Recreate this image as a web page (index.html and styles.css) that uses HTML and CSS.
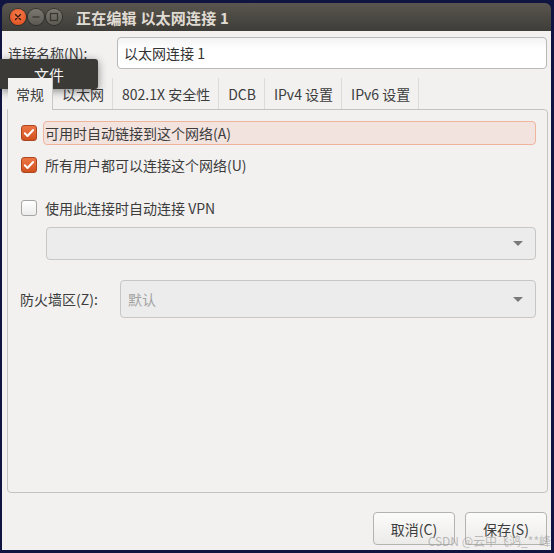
FILE: index.html
```html
<!DOCTYPE html>
<html lang="zh-CN">
<head>
<meta charset="utf-8">
<title>正在编辑 以太网连接 1</title>
<link rel="stylesheet" href="styles.css">
</head>
<body>
<div class="window">
  <div class="titlebar">
    <div class="wbtns">
      <span class="wbtn close"><svg width="16" height="16" viewBox="0 0 16 16"><path d="M5.5 5.5l5 5M10.5 5.5l-5 5" stroke="#3a1a10" stroke-width="1.4" stroke-linecap="round"/></svg></span>
      <span class="wbtn"><svg width="16" height="16" viewBox="0 0 16 16"><path d="M4.5 8h7" stroke="#38372f" stroke-width="1.3"/></svg></span>
      <span class="wbtn"><svg width="16" height="16" viewBox="0 0 16 16"><rect x="4.5" y="4.5" width="7" height="7" fill="none" stroke="#38372f" stroke-width="1.2"/></svg></span>
    </div>
    <div class="title">正在编辑 以太网连接 1</div>
  </div>
  <div class="content">
    <div class="name-row">
      <span class="name-label">连接名称(N):</span>
      <div class="entry">以太网连接 1</div>
    </div>
    <div class="tabs">
      <div class="tab active">常规</div>
      <div class="tab">以太网</div>
      <div class="tab">802.1X 安全性</div>
      <div class="tab">DCB</div>
      <div class="tab">IPv4 设置</div>
      <div class="tab">IPv6 设置</div>
    </div>
    <div class="panel">
      <div class="check-row">
        <span class="cb checked"><svg width="16" height="16" viewBox="0 0 16 16"><path d="M3.8 8.3l2.7 2.7 5.6-6" fill="none" stroke="#fff" stroke-width="2" stroke-linecap="round" stroke-linejoin="round"/></svg></span>
        <span class="cb-label focus">可用时自动链接到这个网络(A)</span>
      </div>
      <div class="check-row r2">
        <span class="cb checked"><svg width="16" height="16" viewBox="0 0 16 16"><path d="M3.8 8.3l2.7 2.7 5.6-6" fill="none" stroke="#fff" stroke-width="2" stroke-linecap="round" stroke-linejoin="round"/></svg></span>
        <span class="cb-label">所有用户都可以连接这个网络(U)</span>
      </div>
      <div class="check-row r3">
        <span class="cb"></span>
        <span class="cb-label">使用此连接时自动连接 VPN</span>
      </div>
      <div class="combo vpn"><span></span><span class="arrow"></span></div>
      <div class="fw-row">
        <span class="fw-label">防火墙区(Z):</span>
        <div class="combo fw"><span class="placeholder">默认</span><span class="arrow"></span></div>
      </div>
    </div>
    <div class="actions">
      <button class="btn">取消(C)</button>
      <button class="btn">保存(S)</button>
    </div>
  </div>
</div>
<div class="tooltip">文件</div>
<div class="watermark">CSDN @云中飞鸿_**峰</div>
</body>
</html>
```
FILE: styles.css
```css
html, body {
  margin: 0;
  padding: 0;
}
body {
  width: 554px;
  height: 553px;
  background: #0f1540;
  font-family: "Noto Sans CJK SC", "Noto Sans", sans-serif;
  font-size: 14px;
  color: #3c3c3c;
  position: relative;
  overflow: hidden;
}
.window {
  margin: 3px 3px 0 2px;
  height: 547px;
  display: flex;
  flex-direction: column;
}
.titlebar {
  height: 28px;
  flex: none;
  border-radius: 6px 6px 0 0;
  background: linear-gradient(#5a564f, #3e3d38);
  display: flex;
  align-items: center;
}
.wbtns {
  display: flex;
  gap: 2px;
  padding-left: 8px;
}
.wbtn {
  width: 16px;
  height: 16px;
  border-radius: 50%;
  background: linear-gradient(#7b7870, #5c5a53);
  box-shadow: 0 0 0 1px rgba(0,0,0,0.35);
  display: block;
}
.wbtn svg { display: block; }
.wbtn.close {
  background: radial-gradient(circle at 50% 35%, #f57b4d, #df4a17);
}
.title {
  margin-left: 14px;
  color: #e0dcd3;
  font-weight: bold;
  font-size: 15px;
  letter-spacing: 0.2px;
}
.content {
  flex: 1;
  background: #f2f1f0;
  display: flex;
  flex-direction: column;
  padding: 0 3px 5px 5px;
}
.name-row {
  display: flex;
  align-items: center;
  margin-top: 6px;
  height: 32px;
}
.name-label {
  padding-left: 1px;
  width: 109px;
}
.entry {
  flex: 1;
  height: 30px;
  margin-right: 1px;
  border: 1px solid #b9b9b9;
  border-radius: 4px;
  background: linear-gradient(#f3f3f3, #ffffff 40%);
  display: flex;
  align-items: center;
  padding-left: 6px;
  color: #333;
}
.tabs {
  margin-top: 9px;
  height: 31px;
  display: flex;
  align-items: flex-start;
  padding-left: 1px;
}
.tab {
  height: 31px;
  padding: 0 8px 0 9px;
  display: flex;
  align-items: center;
  border-right: 1px solid #dcdbd9;
  box-sizing: border-box;
}
.tab.active {
  height: 32px;
  margin-bottom: -1px;
  background: #f2f1f0;
  position: relative;
  z-index: 1;
  padding-left: 8px;
  border-right-color: #c8c7c5;
}
.panel {
  flex: 1;
  border: 1px solid #c4c3c1;
  border-radius: 0 4px 4px 4px;
  padding: 11px 11px 0 13px;
}
.check-row {
  display: flex;
  align-items: center;
  height: 24px;
}
.check-row.r2 { margin-top: 8px; }
.check-row.r3 { margin-top: 19px; }
.cb {
  width: 16px;
  height: 16px;
  box-sizing: border-box;
  border: 1px solid #a6a5a2;
  border-radius: 3px;
  background: linear-gradient(#ffffff, #ececec);
  margin-right: 6px;
  flex: none;
}
.cb.checked {
  border-color: #a9471f;
  background: linear-gradient(#ee7644, #d2501f);
}
.cb svg { display: block; margin: -1px; }
.cb-label {
  height: 24px;
  display: flex;
  align-items: center;
  padding-left: 2px;
  box-sizing: border-box;
}
.cb-label.focus {
  flex: 1;
  background: #f2e3df;
  border: 1px solid #efb49c;
  border-radius: 4px;
  padding-left: 1px;
}
.combo {
  border: 1px solid #c8c7c5;
  border-radius: 4px;
  background: #ececec;
  display: flex;
  align-items: center;
  justify-content: space-between;
  box-sizing: border-box;
  padding: 0 12px 0 7px;
}
.combo.vpn {
  margin: 7px 0 0 25px;
  height: 33px;
}
.arrow {
  width: 0;
  height: 0;
  border-left: 5px solid transparent;
  border-right: 5px solid transparent;
  border-top: 5px solid #7a7a7a;
}
.fw-row {
  display: flex;
  align-items: center;
  margin-top: 20px;
}
.fw-label {
  width: 100px;
  margin-left: -1px;
}
.combo.fw {
  flex: 1;
  height: 38px;
}
.placeholder { color: #a3a3a3; }
.actions {
  display: flex;
  justify-content: flex-end;
  gap: 10px;
  margin-top: 19px;
  padding-right: 1px;
}
.btn {
  width: 82px;
  height: 33px;
  font-family: inherit;
  font-size: 14px;
  color: #3c3c3c;
  border: 1px solid #b4b3b0;
  border-radius: 4px;
  background: linear-gradient(#fbfbfa, #ecebe9);
  padding: 0;
}
.tooltip {
  position: absolute;
  left: 0;
  top: 59px;
  width: 98px;
  height: 30px;
  background: #3b3a37;
  color: #f2f2f2;
  font-size: 15px;
  display: flex;
  align-items: center;
  justify-content: center;
  border-radius: 0 3px 3px 0;
  box-shadow: 0 2px 8px rgba(0,0,0,0.45);
}
.watermark {
  position: absolute;
  right: 3px;
  top: 534px;
  font-size: 12px;
  line-height: 14px;
  color: rgba(140,140,140,0.55);
  font-family: "Noto Sans CJK SC", sans-serif;
}
```
